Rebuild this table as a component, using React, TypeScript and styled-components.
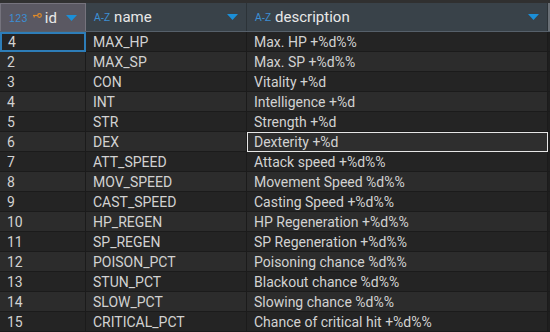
import React from "react";
import styled, { createGlobalStyle } from "styled-components";

const Global = createGlobalStyle`
  html, body { margin: 0; padding: 0; background: #232323; }
  body { font-family: Roboto, "Liberation Sans", Arial, sans-serif; overflow: hidden; }
`;

const COLS = "86px 161px 301px 2px";

const Grid = styled.div`
  width: 550px;
  height: 332px;
  background: #242424;
  border-top: 3px solid #303030;
  box-sizing: border-box;
  overflow: hidden;
`;

const HeaderRow = styled.div`
  display: grid;
  grid-template-columns: ${COLS};
  height: 29px;
  border-bottom: 1px solid #56606a;
  box-sizing: border-box;
  background: #394249;
`;

const HeaderCell = styled.div<{ $active?: boolean }>`
  display: flex;
  align-items: center;
  gap: 3px;
  padding: 0 8px 0 8px;
  box-sizing: border-box;
  background: ${(p) => (p.$active ? "#5a5862" : "#394249")};
  border-right: 1px solid ${(p) => (p.$active ? "#75737d" : "#2c3338")};
  border-left: ${(p) => (p.$active ? "1px solid #75737d" : "none")};
  border-top: ${(p) => (p.$active ? "1px solid #75737d" : "none")};
  color: #e8e8e8;
  font-size: 15px;
`;

const TypeTag = styled.span<{ $wide?: boolean }>`
  color: #3c8fd4;
  font-family: "Liberation Sans", Arial, sans-serif;
  font-size: ${(p) => (p.$wide ? 10.5 : 10)}px;
  letter-spacing: ${(p) => (p.$wide ? 0.4 : 0)}px;
  margin-right: ${(p) => (p.$wide ? 2 : 1)}px;
`;

const Label = styled.span`
  flex: 1;
  white-space: nowrap;
`;

const Edge = styled.div`
  background: #6a7076;
`;

const Row = styled.div<{ $odd: boolean }>`
  display: grid;
  grid-template-columns: ${COLS};
  height: 20px;
  background: ${(p) => (p.$odd ? "#242424" : "#2c2c2c")};
  border-bottom: 1px solid #1b1b1b;
  box-sizing: border-box;
`;

const Cell = styled.div<{ $sel?: "blue" | "white" }>`
  display: flex;
  align-items: center;
  padding-left: ${(p) => (p.$sel ? 6 : 7)}px;
  border-right: 1px solid #1b1b1b;
  box-sizing: border-box;
  color: #d2d2d2;
  font-size: 14px;
  white-space: nowrap;
  overflow: hidden;
  ${(p) =>
    p.$sel === "blue"
      ? "border: 2px solid #2d7db8; margin-bottom: -1px;"
      : p.$sel === "white"
      ? "border: 1px solid #e6e6e6; margin-bottom: -1px; background: #2e2e2e;"
      : ""}
`;

const RowEdge = styled.div`
  background: #1f1f1f;
`;

const Triangle = () => (
  <svg width="11" height="6" viewBox="0 0 11 6">
    <polygon points="0,0 11,0 5.5,6" fill="#1b8fd8" />
  </svg>
);

const Key = () => (
  <svg width="9" height="6" viewBox="0 0 9 6" style={{ marginTop: -4, marginRight: 0 }}>
    <circle cx="6.5" cy="2.5" r="1.8" fill="none" stroke="#e08a2a" strokeWidth="1.2" />
    <line x1="0" y1="2.5" x2="4.7" y2="2.5" stroke="#e08a2a" strokeWidth="1.2" />
    <line x1="1.2" y1="2.5" x2="1.2" y2="4.5" stroke="#e08a2a" strokeWidth="1.2" />
  </svg>
);

const rows: [string, string, string][] = [
  ["4", "MAX_HP", "Max. HP +%d%%"],
  ["2", "MAX_SP", "Max. SP +%d%%"],
  ["3", "CON", "Vitality +%d"],
  ["4", "INT", "Intelligence +%d"],
  ["5", "STR", "Strength +%d"],
  ["6", "DEX", "Dexterity +%d"],
  ["7", "ATT_SPEED", "Attack speed +%d%%"],
  ["8", "MOV_SPEED", "Movement Speed %d%%"],
  ["9", "CAST_SPEED", "Casting Speed +%d%%"],
  ["10", "HP_REGEN", "HP Regeneration +%d%%"],
  ["11", "SP_REGEN", "SP Regeneration +%d%%"],
  ["12", "POISON_PCT", "Poisoning chance %d%%"],
  ["13", "STUN_PCT", "Blackout chance %d%%"],
  ["14", "SLOW_PCT", "Slowing chance %d%%"],
  ["15", "CRITICAL_PCT", "Chance of critical hit +%d%%"],
];

export default function App() {
  return (
    <>
      <Global />
      <Grid>
        <HeaderRow>
          <HeaderCell $active>
            <TypeTag $wide>123</TypeTag>
            <Key />
            <Label>id</Label>
            <Triangle />
          </HeaderCell>
          <HeaderCell>
            <TypeTag>A-Z</TypeTag>
            <Label>name</Label>
            <Triangle />
          </HeaderCell>
          <HeaderCell>
            <TypeTag>A-Z</TypeTag>
            <Label>description</Label>
            <Triangle />
          </HeaderCell>
          <Edge />
        </HeaderRow>
        {rows.map(([id, name, desc], i) => (
          <Row key={i} $odd={i % 2 === 0}>
            <Cell $sel={i === 0 ? "blue" : undefined}>{id}</Cell>
            <Cell>{name}</Cell>
            <Cell $sel={i === 5 ? "white" : undefined}>{desc}</Cell>
            <RowEdge />
          </Row>
        ))}
      </Grid>
    </>
  );
}
